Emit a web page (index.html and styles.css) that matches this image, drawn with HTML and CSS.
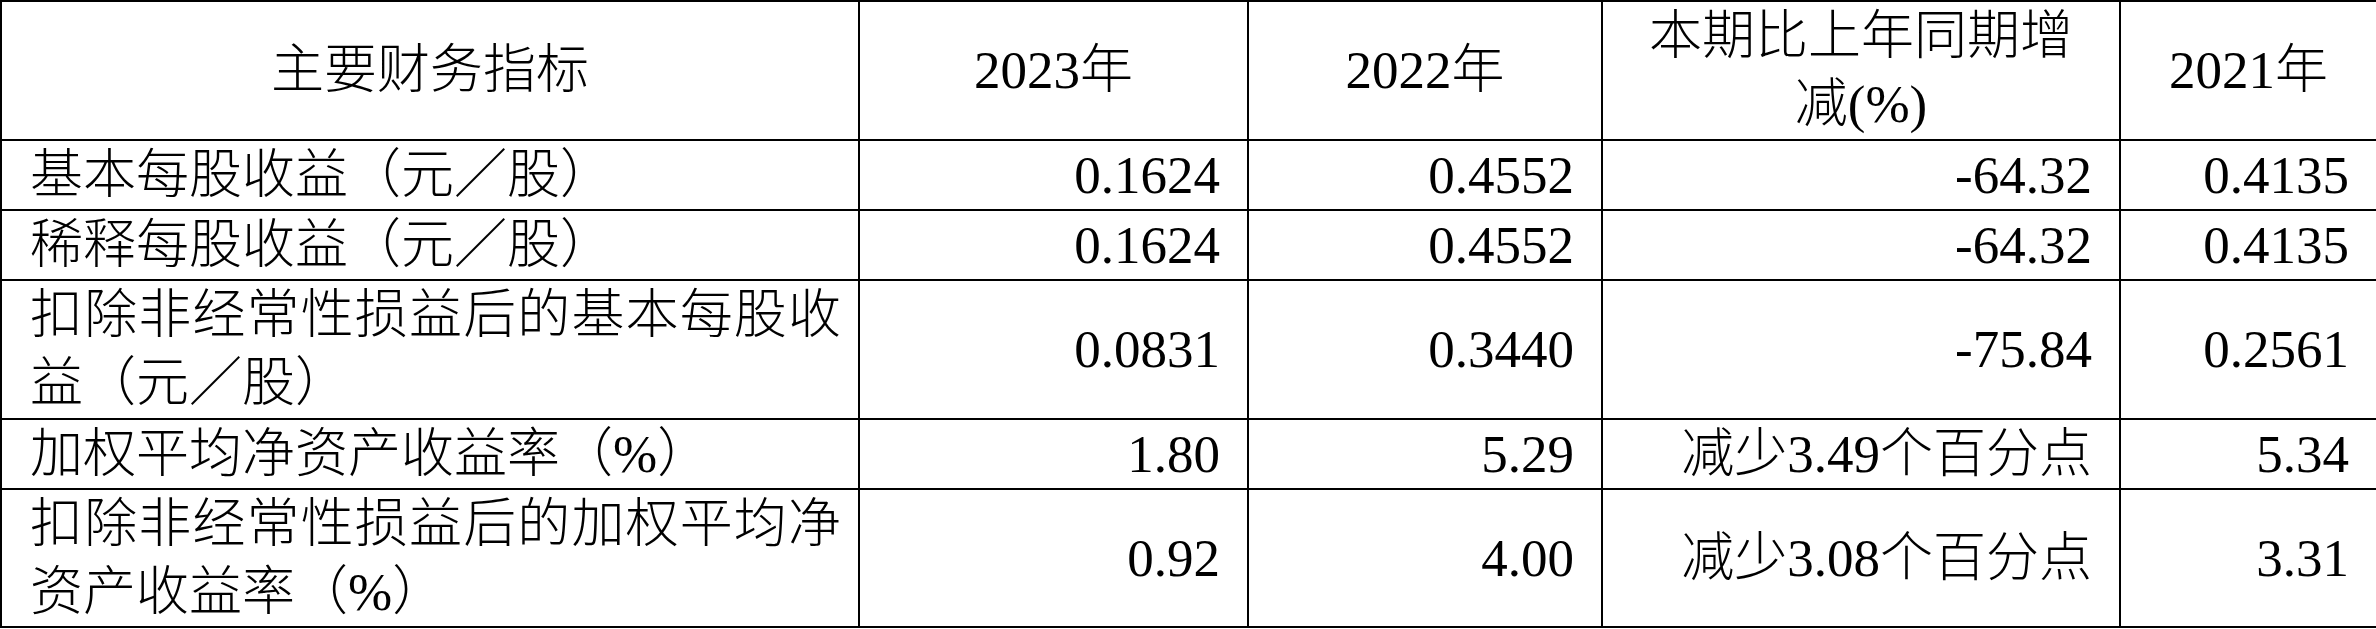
FILE: index.html
```html
<!DOCTYPE html>
<html lang="zh-CN">
<head>
    <meta charset="UTF-8">
    <meta name="viewport" content="width=device-width, initial-scale=1.0">
    <title>主要财务指标</title>
    <link rel="stylesheet" href="styles.css">
</head>
<body>
    <table class="fin-table">
        <colgroup>
            <col class="col-name">
            <col class="col-2023">
            <col class="col-2022">
            <col class="col-change">
            <col class="col-2021">
        </colgroup>
        <thead>
            <tr>
                <th>主要财务指标</th>
                <th>2023年</th>
                <th>2022年</th>
                <th>本期比上年同期增减(%)</th>
                <th>2021年</th>
            </tr>
        </thead>
        <tbody>
            <tr>
                <td class="label">基本每股收益（元／股）</td>
                <td class="num">0.1624</td>
                <td class="num">0.4552</td>
                <td class="num">-64.32</td>
                <td class="num">0.4135</td>
            </tr>
            <tr>
                <td class="label">稀释每股收益（元／股）</td>
                <td class="num">0.1624</td>
                <td class="num">0.4552</td>
                <td class="num">-64.32</td>
                <td class="num">0.4135</td>
            </tr>
            <tr>
                <td class="label">扣除非经常性损益后的基本每股收益（元／股）</td>
                <td class="num">0.0831</td>
                <td class="num">0.3440</td>
                <td class="num">-75.84</td>
                <td class="num">0.2561</td>
            </tr>
            <tr>
                <td class="label">加权平均净资产收益率（%）</td>
                <td class="num">1.80</td>
                <td class="num">5.29</td>
                <td class="num">减少3.49个百分点</td>
                <td class="num">5.34</td>
            </tr>
            <tr>
                <td class="label">扣除非经常性损益后的加权平均净资产收益率（%）</td>
                <td class="num">0.92</td>
                <td class="num">4.00</td>
                <td class="num">减少3.08个百分点</td>
                <td class="num">3.31</td>
            </tr>
        </tbody>
    </table>
</body>
</html>
```

FILE: styles.css
```css
* {
    margin: 0;
    padding: 0;
    box-sizing: border-box;
}

body {
    background: #fff;
    color: #000;
    font-family: "Liberation Serif", "Noto Sans CJK SC", serif;
}

.fin-table {
    width: 2376px;
    border-collapse: collapse;
    table-layout: fixed;
    font-size: 53px;
    line-height: 68.25px;
    font-weight: 300;
}

.col-name { width: 858px; }
.col-2023 { width: 389px; }
.col-2022 { width: 354px; }
.col-change { width: 518px; }
.col-2021 { width: 257px; }

.fin-table th,
.fin-table td {
    border: 2px solid #000;
    vertical-align: middle;
}

.fin-table th {
    font-weight: 300;
    text-align: center;
    padding: 0 28px;
}

.fin-table .label {
    text-align: justify;
    padding: 0 17px 0 28px;
}

.fin-table .num {
    text-align: right;
    padding: 0 27px 0 0;
}
```
